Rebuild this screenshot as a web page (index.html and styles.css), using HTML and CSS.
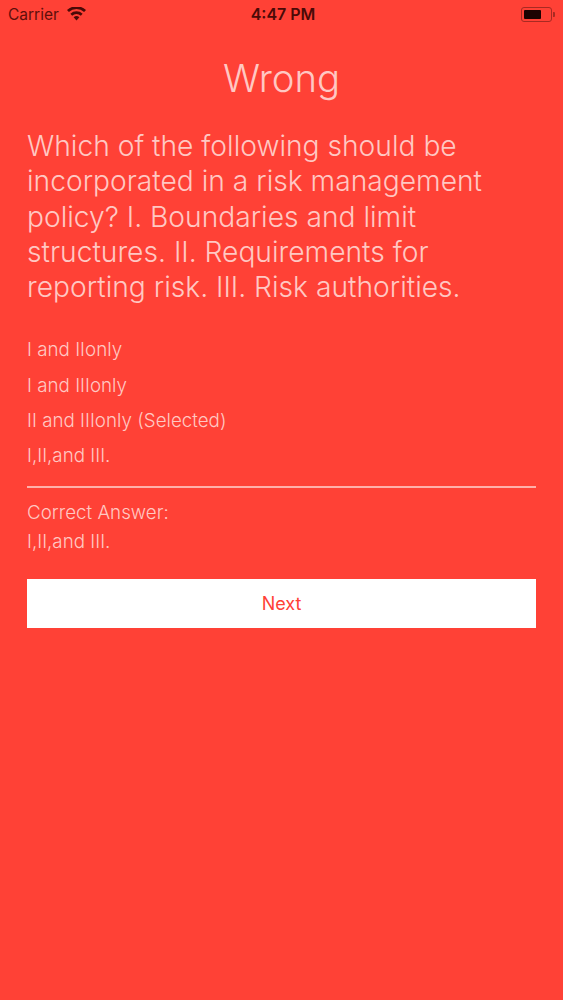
FILE: index.html
```html
<!DOCTYPE html>
<html lang="en">
<head>
  <meta charset="UTF-8">
  <title>Wrong</title>
  <link rel="stylesheet" href="styles.css">
</head>
<body>
  <div class="status-bar">
    <div class="status-left">
      <span>Carrier</span>
      <svg class="wifi" viewBox="0 0 18 13" width="19" height="14">
        <path d="M9 12.600 6.300 9.600a3.900 3.900 0 0 1 5.400 0z" />
        <path d="M4.900 8.100 3.200 6.200a8.500 8.500 0 0 1 11.600 0l-1.700 1.900a6 6 0 0 0-8.200 0z" />
        <path d="M1.800 4.700 0 2.800a13 13 0 0 1 18 0l-1.800 1.900a10.500 10.500 0 0 0-14.400 0z" />
      </svg>
    </div>
    <div class="status-time">4:47 PM</div>
    <div class="status-right">
      <div class="battery"><div class="battery-level"></div></div>
      <div class="battery-cap"></div>
    </div>
  </div>

  <main class="content">
    <h1 class="result">Wrong</h1>
    <p class="question">Which of the following should be incorporated in a risk management policy? I. Boundaries and limit structures. II. Requirements for reporting risk. III. Risk authorities.</p>

    <ul class="options">
      <li>I and IIonly</li>
      <li>I and IIIonly</li>
      <li>II and IIIonly (Selected)</li>
      <li>I,II,and III.</li>
    </ul>

    <hr class="divider">

    <div class="answer">
      <div>Correct Answer:</div>
      <div>I,II,and III.</div>
    </div>

    <button class="next-btn">Next</button>
  </main>
</body>
</html>
```

FILE: styles.css
```css
body {
    margin: 0;
    height: 1000px;
    background-color: #ff4136;
    font-family: 'Inter', 'Liberation Sans', sans-serif;
    color: #ffc8c3;
    overflow: hidden;
}

.status-bar {
    display: grid;
    grid-template-columns: 1fr auto 1fr;
    align-items: center;
    height: 28px;
    padding: 0 8px;
    color: #5e0f0b;
    font-size: 15.5px;
}

.status-left {
    display: flex;
    align-items: center;
    gap: 8px;
}

.wifi {
    fill: #4a0a07;
}

.status-time {
    padding-left: 3px;
    font-weight: 600;
    font-size: 16px;
    color: #4a0a07;
}

.status-right {
    display: flex;
    justify-content: flex-end;
    align-items: center;
    gap: 1px;
}

.battery {
    box-sizing: border-box;
    width: 31px;
    height: 15px;
    padding: 2px;
    border: 1px solid #a82a22;
    border-radius: 3px;
}

.battery-level {
    width: 17px;
    height: 100%;
    background-color: #1c0302;
    border-radius: 1px;
}

.battery-cap {
    width: 2px;
    height: 5px;
    background-color: #a82a22;
    border-radius: 0 1px 1px 0;
}

.content {
    padding: 0 27px;
}

.result {
    margin: 27px 0 0;
    font-size: 38.3px;
    line-height: 46px;
    font-weight: 300;
    text-align: center;
}

.question {
    margin: 28px 0 0;
    font-size: 28.2px;
    line-height: 35.3px;
    font-weight: 300;
}

.options {
    list-style: none;
    margin: 27px 0 0;
    padding: 0;
    font-size: 18.8px;
    line-height: 35.3px;
    font-weight: 300;
}

.divider {
    margin: 12px 0 0;
    border: none;
    height: 2px;
    background-color: #ffb0aa;
}

.answer {
    margin-top: 10px;
    font-size: 18.8px;
    line-height: 29px;
    font-weight: 300;
}

.next-btn {
    display: block;
    width: 100%;
    height: 49px;
    margin-top: 23px;
    border: none;
    background-color: #fff;
    color: #ff4136;
    font-family: inherit;
    font-size: 18px;
}
```
